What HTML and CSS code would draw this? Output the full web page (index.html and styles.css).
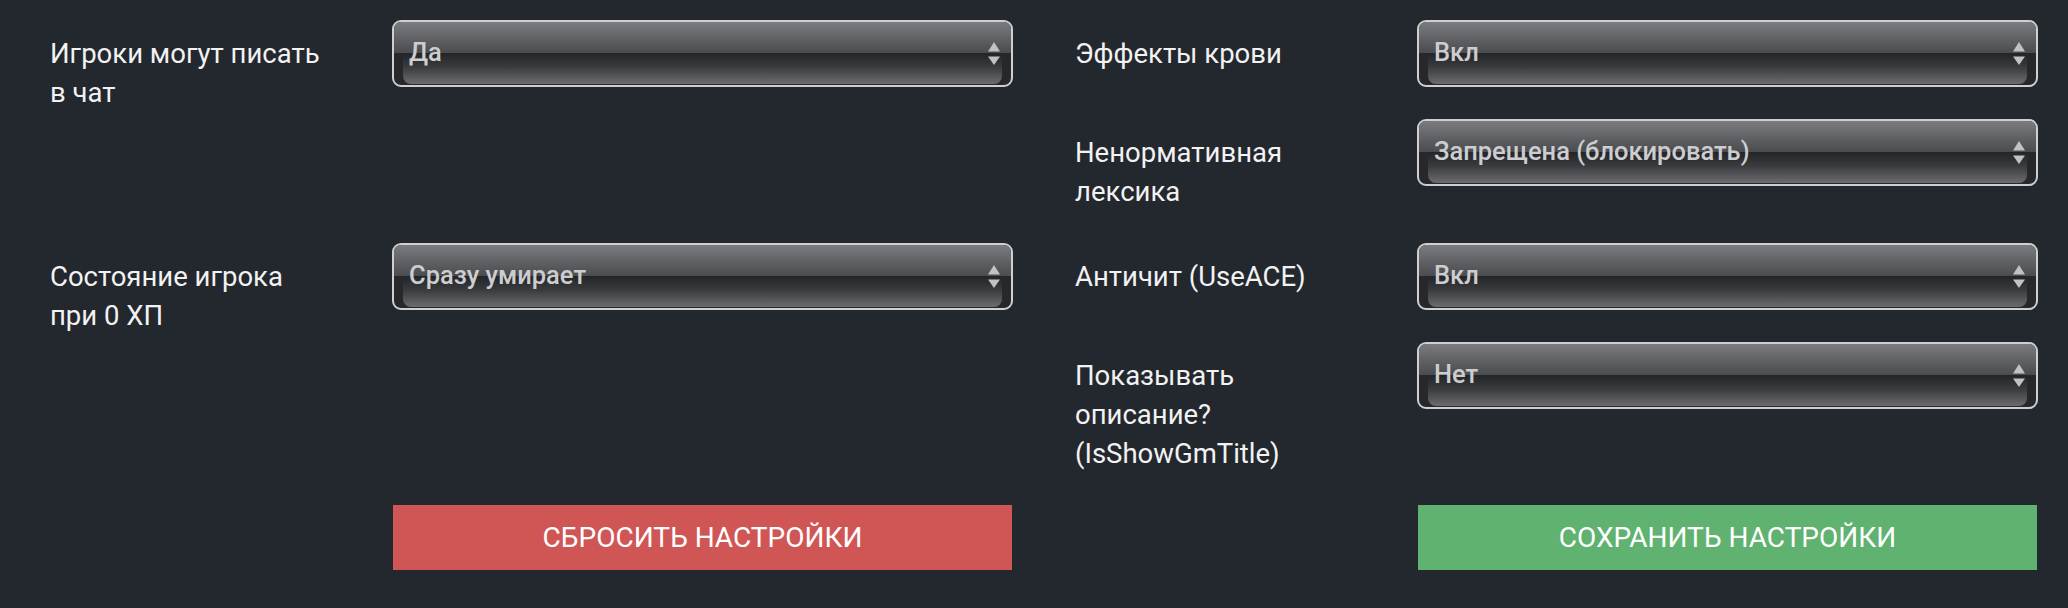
FILE: index.html
```html
<!DOCTYPE html>
<html lang="ru">
<head>
<meta charset="utf-8">
<title>Настройки</title>
<link rel="stylesheet" href="styles.css">
</head>
<body>
<div class="page">
  <div class="columns">
    <div class="col">
      <div class="row">
        <div class="label">Игроки могут писать<br>в чат</div>
        <div class="select"><span class="value">Да</span><svg class="arrows" viewBox="0 0 12 23" width="12" height="23"><polygon points="6,0 12,9.5 0,9.5"/><polygon points="0,14.5 12,14.5 6,23"/></svg></div>
      </div>
      <div class="row row-empty"></div>
      <div class="row">
        <div class="label">Состояние игрока<br>при 0 ХП</div>
        <div class="select"><span class="value">Сразу умирает</span><svg class="arrows" viewBox="0 0 12 23" width="12" height="23"><polygon points="6,0 12,9.5 0,9.5"/><polygon points="0,14.5 12,14.5 6,23"/></svg></div>
      </div>
    </div>
    <div class="col">
      <div class="row">
        <div class="label">Эффекты крови</div>
        <div class="select"><span class="value">Вкл</span><svg class="arrows" viewBox="0 0 12 23" width="12" height="23"><polygon points="6,0 12,9.5 0,9.5"/><polygon points="0,14.5 12,14.5 6,23"/></svg></div>
      </div>
      <div class="row">
        <div class="label">Ненормативная<br>лексика</div>
        <div class="select"><span class="value">Запрещена (блокировать)</span><svg class="arrows" viewBox="0 0 12 23" width="12" height="23"><polygon points="6,0 12,9.5 0,9.5"/><polygon points="0,14.5 12,14.5 6,23"/></svg></div>
      </div>
      <div class="row">
        <div class="label">Античит (UseACE)</div>
        <div class="select"><span class="value">Вкл</span><svg class="arrows" viewBox="0 0 12 23" width="12" height="23"><polygon points="6,0 12,9.5 0,9.5"/><polygon points="0,14.5 12,14.5 6,23"/></svg></div>
      </div>
      <div class="row">
        <div class="label">Показывать<br>описание?<br>(IsShowGmTitle)</div>
        <div class="select"><span class="value">Нет</span><svg class="arrows" viewBox="0 0 12 23" width="12" height="23"><polygon points="6,0 12,9.5 0,9.5"/><polygon points="0,14.5 12,14.5 6,23"/></svg></div>
      </div>
    </div>
  </div>
  <div class="actions">
    <div class="action"><div class="spacer"></div><button class="btn btn-reset" type="button">СБРОСИТЬ НАСТРОЙКИ</button></div>
    <div class="action"><div class="spacer"></div><button class="btn btn-save" type="button">СОХРАНИТЬ НАСТРОЙКИ</button></div>
  </div>
</div>
</body>
</html>
```

FILE: styles.css
```css
* { box-sizing: border-box; }
html, body {
  margin: 0;
  padding: 0;
  background: #23272e;
  height: 100%;
}
body {
  font-family: Roboto, "Liberation Sans", sans-serif;
  color: #f2f2f2;
}
.page {
  padding: 20px 30px 0 50px;
}
.columns {
  display: flex;
  gap: 62px;
}
.col {
  display: flex;
  flex-direction: column;
  width: 963px;
}
.row {
  display: flex;
  align-items: flex-start;
  margin-bottom: 32px;
}
.row-empty {
  height: 67px;
}
.label {
  flex: 0 0 342px;
  padding-top: 14px;
  font-size: 27.5px;
  line-height: 39px;
  white-space: nowrap;
  color: #f2f2f2;
}
.select {
  position: relative;
  flex: 0 0 621px;
  height: 67px;
  border: 2px solid #cfcfcf;
  border-radius: 9px;
  background: #27282c;
  display: flex;
  align-items: center;
  justify-content: space-between;
  padding: 0 11px 4px 15px;
  overflow: hidden;
}
.select::before {
  content: "";
  position: absolute;
  left: 0;
  right: 0;
  top: 0;
  height: 31px;
  background: linear-gradient(to bottom, #7b7c80 0%, #5d5e62 60%, #4b4c50 100%);
}
.select::after {
  content: "";
  position: absolute;
  left: 9px;
  right: 9px;
  top: 31px;
  bottom: 1px;
  border-radius: 0 0 8px 8px;
  background: linear-gradient(to bottom, #232428 0%, #3a3b3f 45%, #6b6c70 100%);
}
.value {
  position: relative;
  z-index: 1;
  font-size: 25.5px;
  font-weight: 500;
  color: #cdcdcf;
  white-space: nowrap;
}
.arrows {
  position: relative;
  z-index: 1;
  fill: #c2c2c4;
  margin-top: 4px;
}
.actions {
  display: flex;
  gap: 62px;
}
.action {
  display: flex;
  width: 963px;
}
.spacer {
  flex: 0 0 343px;
}
.btn {
  flex: 0 0 619px;
  height: 65px;
  border: 0;
  margin: 0;
  padding: 0;
  font-family: Roboto, "Liberation Sans", sans-serif;
  font-size: 28px;
  color: #ffffff;
  text-transform: uppercase;
  cursor: pointer;
}
.btn-reset { background: #d05656; }
.btn-save { background: #5fb26f; }
```
